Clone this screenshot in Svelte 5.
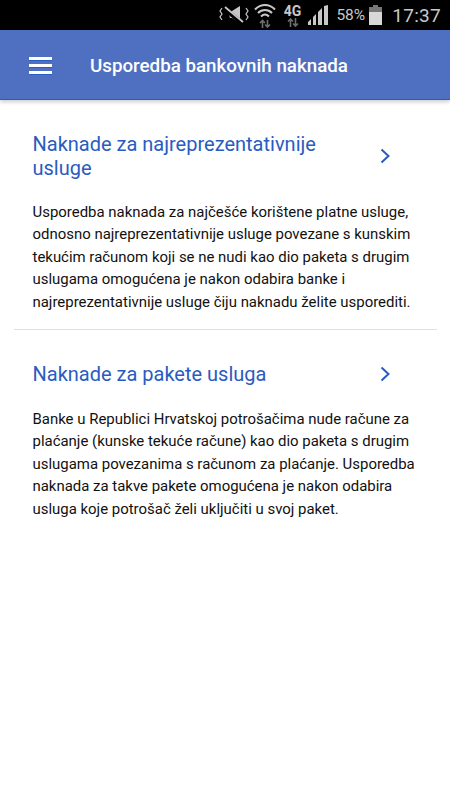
<script>
  const sections = [
    {
      title: "Naknade za najreprezentativnije usluge",
      text: "Usporedba naknada za najčešće korištene platne usluge, odnosno najreprezentativnije usluge povezane s kunskim tekućim računom koji se ne nudi kao dio paketa s drugim uslugama omogućena je nakon odabira banke i najreprezentativnije usluge čiju naknadu želite usporediti."
    },
    {
      title: "Naknade za pakete usluga",
      text: "Banke u Republici Hrvatskoj potrošačima nude račune za plaćanje (kunske tekuće račune) kao dio paketa s drugim uslugama povezanima s računom za plaćanje. Usporedba naknada za takve pakete omogućena je nakon odabira usluga koje potrošač želi uključiti u svoj paket."
    }
  ];
</script>

<div class="screen">
  <div class="statusbar">
    <!-- mute / vibrate -->
    <svg class="ic-mute" width="30" height="20" viewBox="0 0 30 20" fill="none" stroke="#c8c8c8">
      <path d="M8 3l3 3h2l8-5v17l-8-5h-2z" fill="#c8c8c8" stroke="none" />
      <path d="M6 4l17 14" stroke="#000" stroke-width="4.500" />
      <path d="M6 2l18 15" stroke-width="1.800" />
      <path d="M3 3L1 6l2 3-2 3 2 3M27 3l2 3-2 3 2 3-2 3" stroke-width="1.200" />
    </svg>
    <!-- wifi -->
    <svg class="ic-wifi" width="22" height="25" viewBox="0 0 22 25" fill="none" stroke="#c8c8c8" stroke-width="2">
      <path d="M1 6.500c6-6 14-6 20 0M4 10c4-4 10-4 14 0M7 13.500c2.500-2.500 5.500-2.500 8 0" />
      <path d="M8.500 25v-7M6 20l2.500-2.500 2.500 2.500M13.500 17v7M11 21.500l2.500 2.500 2.500-2.500" stroke="#6e6e6e" stroke-width="1.600" />
    </svg>
    <div class="net">
      <span class="net-label">4G</span>
      <svg width="12" height="9" viewBox="0 0 12 9" fill="none" stroke="#6e6e6e" stroke-width="1.600">
        <path d="M3.500 9V1M1 3.500l2.500-2.500 2.500 2.500M8.500 0v8M6 5.500l2.500 2.500 2.500-2.500" />
      </svg>
    </div>
    <svg class="ic-signal" width="20" height="20" viewBox="0 0 20 20" fill="#c8c8c8">
      <path d="M0 20v-3l3-3v6zM5 20v-8l3-3v11zM10 20V7l4-4v17zM16 20V1l4-1v20z" />
    </svg>
    <span class="pct">58%</span>
    <svg class="ic-batt" width="13" height="20" viewBox="0 0 13 20">
      <path d="M4 0h5v2h4v5H0V2h4z" fill="#777" />
      <rect y="7" width="13" height="13" fill="#d8d8d8" />
    </svg>
    <span class="clock">17:37</span>
  </div>

  <header class="appbar">
    <button class="menu" aria-label="menu">
      <span></span><span></span><span></span>
    </button>
    <h1>Usporedba bankovnih naknada</h1>
  </header>

  <main>
    {#each sections as s, i}
      <section class:first={i === 0}>
        <div class="head">
          <h2>{s.title}</h2>
          <svg class="chev" width="12" height="18" viewBox="0 0 12 18" fill="none" stroke="#2a5bc0" stroke-width="2">
            <path d="M2.500 2.500l7 6.500-7 6.500" />
          </svg>
        </div>
        <p>{s.text}</p>
      </section>
    {/each}
  </main>
</div>

<style>
  :global(body) {
    margin: 0;
    background: #fff;
  }

  .screen {
    width: 450px;
    height: 800px;
    overflow: hidden;
    font-family: Roboto, "Liberation Sans", sans-serif;
    background: #fff;
  }

  .statusbar {
    height: 30px;
    background: #000;
    display: flex;
    align-items: center;
    justify-content: flex-end;
    padding-right: 9px;
    color: #c8c8c8;
    box-sizing: border-box;
  }

  .ic-mute { margin-right: 5px; }
  .ic-wifi { margin-right: 8px; }

  .net {
    display: flex;
    flex-direction: column;
    align-items: center;
    margin-right: 7px;
    line-height: 1;
  }

  .net-label {
    font-size: 14px;
    font-weight: 700;
    line-height: 14px;
  }

  .ic-signal { margin-right: 8px; }

  .pct {
    font-size: 15.500px;
    margin-right: 4px;
  }

  .ic-batt { margin-right: 10px; }

  .clock {
    font-size: 19px;
    letter-spacing: 0.3px;
  }

  .appbar {
    height: 68px;
    padding-top: 1px;
    background: #4f70c0;
    border-bottom: 1px solid #2a5bc0;
    box-shadow: 0 2px 4px rgba(0, 0, 0, 0.2);
    display: flex;
    align-items: center;
    box-sizing: content-box;
  }

  .menu {
    width: 23px;
    margin-left: 28.500px;
    padding: 0;
    border: 0;
    background: none;
    display: flex;
    flex-direction: column;
    gap: 4px;
  }

  .menu span {
    display: block;
    height: 3px;
    background: #fff;
    box-shadow: 0 1px 0 #2a5bc0;
  }

  h1 {
    margin: 2px 0 0 38.500px;
    font-size: 18.750px;
    font-weight: 500;
    color: #fff;
  }

  main {
    padding: 0 13px 0 14px;
  }

  section {
    padding: 20px 18.500px 0;
  }

  section.first {
    padding-top: 32px;
    padding-bottom: 16px;
    border-bottom: 1px solid #e0e0e0;
    margin-bottom: 12px;
  }

  .head {
    display: flex;
    align-items: center;
    justify-content: space-between;
    padding-right: 28px;
  }

  .chev {
    margin-bottom: 1px;
  }

  h2 {
    margin: 0;
    max-width: 300px;
    font-size: 20px;
    line-height: 24px;
    font-weight: 400;
    color: #2a5bc0;
  }

  p {
    margin: 21.500px 0 0;
    font-size: 14.950px;
    line-height: 22.500px;
    color: #111;
  }

  .first p {
    margin-top: 20.500px;
  }
</style>
